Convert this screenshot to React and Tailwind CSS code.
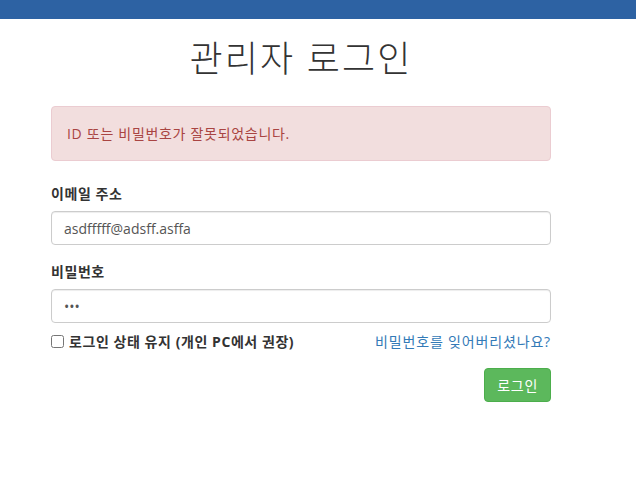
import React from 'react';

const font = { fontFamily: '"Open Sans", "Noto Sans CJK KR", sans-serif' };

export default function App() {
    return (
        <div className="min-h-[480px] bg-white text-[14px] text-[#333]" style={font}>
            <div className="h-[19px] bg-[#2d62a3]" />
            <div className="w-[500px] ml-[51px]">
                <h1 className="mt-[14px] mb-[21px] text-center text-[36px] leading-[52px] font-light tracking-[0.06em] text-[#333]">
                    관리자 로그인
                </h1>

                <div className="h-[55px] px-[15px] flex items-center rounded border border-[#ebccd1] bg-[#f2dede] text-[#a94442] tracking-[0.05em]">
                    ID 또는 비밀번호가 잘못되었습니다.
                </div>

                <form className="mt-[20px]" onSubmit={(e) => e.preventDefault()}>
                    <div className="mb-[14px]">
                        <label className="block mb-[5px] leading-[25px] font-bold tracking-[0.04em]">이메일 주소</label>
                        <input
                            type="email"
                            defaultValue="asdfffff@adsff.asffa"
                            className="block w-full h-[34px] px-[12px] rounded border border-[#ccc] text-[#555] shadow-[inset_0_1px_1px_rgba(0,0,0,0.075)] outline-none"
                        />
                    </div>
                    <div className="mb-[8px]">
                        <label className="block mb-[5px] leading-[25px] font-bold tracking-[0.04em]">비밀번호</label>
                        <input
                            type="password"
                            defaultValue="abc"
                            className="block w-full h-[34px] px-[12px] rounded border border-[#ccc] text-[#555] shadow-[inset_0_1px_1px_rgba(0,0,0,0.075)] outline-none"
                        />
                    </div>
                    <div className="flex items-center justify-between h-[20px]">
                        <label className="flex items-center font-bold tracking-[0.04em]">
                            <input type="checkbox" className="w-[13px] h-[13px] mr-[5px]" />
                            로그인 상태 유지 (개인 PC에서 권장)
                        </label>
                        <a href="#" className="text-[#337ab7] tracking-[0.06em]">비밀번호를 잊어버리셨나요?</a>
                    </div>
                    <div className="flex justify-end mt-[17px]">
                        <button
                            type="submit"
                            className="h-[34px] px-[12px] rounded border border-[#4cae4c] bg-[#5cb85c] text-white tracking-[0.05em]"
                        >
                            로그인
                        </button>
                    </div>
                </form>
            </div>
        </div>
    );
}
